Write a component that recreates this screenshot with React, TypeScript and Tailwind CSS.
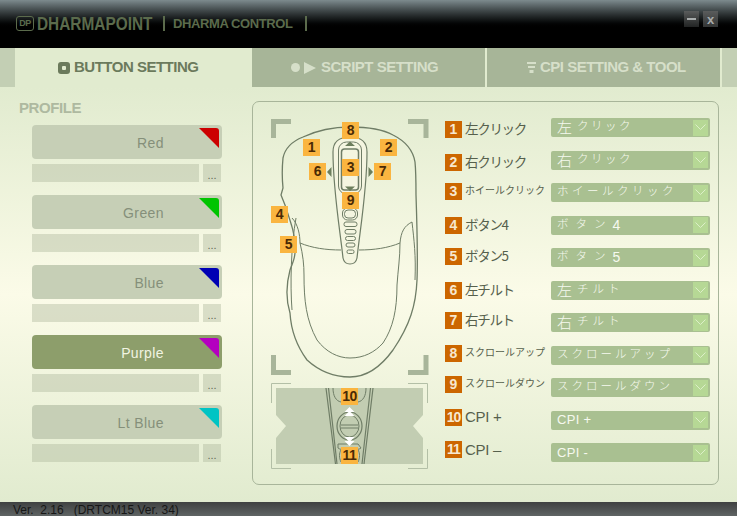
const uiFont = { fontFamily: '"Liberation Sans", Arial, sans-serif' };

const profiles = [
  { name: "Red", color: "#cc0000" },
  { name: "Green", color: "#00c400" },
  { name: "Blue", color: "#0000b4" },
  { name: "Purple", color: "#b400c0", active: true },
  { name: "Lt Blue", color: "#00c4c4" },
];

const rows = [
  { no: "1", shift: "mt-[3px]", label: "左クリック", head: "左", rest: "クリック", track: "tracking-[2.5px]" },
  { no: "2", shift: "mt-[3px]", label: "右クリック", head: "右", rest: "クリック", track: "tracking-[2.5px]" },
  { no: "3", shift: "mt-0", label: "ホイールクリック", small: true, rest: "ホイールクリック", track: "tracking-[3.5px]" },
  { no: "4", shift: "mt-[1px]", label: "ボタン4", rest: "ボタン", tail: "4", track: "tracking-[7px]" },
  { no: "5", shift: "mt-0", label: "ボタン5", rest: "ボタン", tail: "5", track: "tracking-[7px]" },
  { no: "6", shift: "mt-[1px]", label: "左チルト", head: "左", rest: "チルト", track: "tracking-[4px]" },
  { no: "7", shift: "-mt-[1px]", label: "右チルト", head: "右", rest: "チルト", track: "tracking-[4px]" },
  { no: "8", shift: "-mt-[1px]", label: "スクロールアップ", small: true, rest: "スクロールアップ", track: "tracking-[3px]" },
  { no: "9", shift: "-mt-[2px]", label: "スクロールダウン", small: true, rest: "スクロールダウン", track: "tracking-[3px]" },
  { no: "10", shift: "-mt-[2px]", label: "CPI +", latin: "CPI +" },
  { no: "11", shift: "-mt-[2px]", label: "CPI –", latin: "CPI -" },
];

const pins = [
  { no: "8", cls: "left-[89px] top-[20px]" },
  { no: "1", cls: "left-[50px] top-[37px]" },
  { no: "2", cls: "left-[127px] top-[37px]" },
  { no: "6", cls: "left-[56px] top-[61px]" },
  { no: "7", cls: "left-[121px] top-[61px]" },
  { no: "3", cls: "left-[89px] top-[57px]" },
  { no: "9", cls: "left-[89px] top-[90px]" },
  { no: "4", cls: "left-[18px] top-[104px]" },
  { no: "5", cls: "left-[27px] top-[134px]" },
  { no: "10", cls: "left-[88px] top-[286px]" },
  { no: "11", cls: "left-[88px] top-[345px]" },
];

function MouseDrawing() {
  const line = "#6f7d66";
  return (
    <svg className="block h-full w-full" viewBox="253 102 192 382" fill="none">
      {/* frame corners */}
      <path d="M273.500 138V121.500H291M426 138V121.500H408M273.500 355V372.500H291M426 355V372.500H408" stroke="#a8b59a" strokeWidth="5" />
      <path d="M271.500 403V383.500H291M427.500 403V383.500H408M271.500 449V468.500H291M427.500 449V468.500H408" stroke="#b3bfa6" />

      {/* body */}
      <path d="M283 158C285 148 293 141 303 137C318 130 335 127 350 127C367 127 384 130 393 135C405 141 413 150 415 162C416 172 416 182 416 195C417 225 418 255 417 280C416 305 410 325 393 350C380 368 365 377 350 377C332 377 318 370 307 360C296 345 291 330 290 313C286 300 286 285 290 270C293 262 296 256 295 245C295 235 292 226 285 205L281 195L283 188C282 178 282 168 283 158Z" stroke={line} strokeWidth="1.300" />
      <path d="M296 218C291 245 290 285 292 310" stroke={line} />
      <path d="M292 218C298 224 300 235 300 243C303 255 304 265 304 275C304 300 306 320 317 340C326 352 338 358 350 358C364 358 375 352 383 343C393 328 397 310 397 285C398 270 400 258 400 243C401 232 404 226 412 222" stroke={line} />
      <path d="M300 243C312 248 326 250 341 250M359 250C374 250 388 248 400 243" stroke={line} />
      <path d="M412 222C414 240 416 255 415 280" stroke={line} />

      {/* centre strip */}
      <path d="M350 137C338 137 333 143 333 152C333 190 340 230 343 258C344 263 347 264 350 264C353 264 356 263 357 258C360 230 367 190 367 152C367 143 362 137 350 137Z" fill="#f4f5e0" stroke={line} strokeWidth="1.200" />
      <rect x="338.500" y="142" width="23" height="52" rx="8" stroke={line} />
      <rect x="341.500" y="149" width="17" height="41" rx="3" stroke={line} strokeWidth="1.500" />
      <path d="M350 141.500L355 146H345ZM350 191L345 186.500H355ZM327 172L331.500 167V177ZM373 172L368.500 167V177Z" fill="#6c7e5c" />
      <rect x="342.500" y="208" width="15" height="12" rx="5" stroke={line} />
      <rect x="344.500" y="210" width="11" height="8" rx="3.500" stroke={line} />
      <rect x="344" y="222" width="13" height="4.500" rx="2" stroke={line} />
      <rect x="345" y="229.500" width="11" height="4.500" rx="2" stroke={line} />
      <rect x="345.500" y="236.500" width="10" height="4" rx="2" stroke={line} />
      <rect x="346" y="243" width="9" height="4" rx="2" stroke={line} />
      <rect x="347" y="250" width="7" height="3.500" rx="1.500" stroke={line} />

      {/* zoomed wheel */}
      <path d="M276 388H423V415L413 426L423 438V464H276V438L286 426L276 415Z" fill="#c2cdb2" />
      <path d="M326 388L335.500 464M328.500 388L337 464M373 388L364 464M370.500 388L362 464" stroke={line} strokeWidth="1.200" />
      <path d="M333 388C333 396 336 401 341 402M366 388C366 396 363 401 358 402" stroke={line} />
      <path d="M338 444L358 444L361 448C358 451 341 451 338 448Z" fill="#c2cdb2" stroke={line} />
      <ellipse cx="349.500" cy="426" rx="12.500" ry="14" stroke={line} strokeWidth="1.200" />
      <ellipse cx="349.500" cy="426" rx="9.500" ry="11" stroke={line} />
      <path d="M341 425H358M341 428H358" stroke={line} />
      <path d="M349.500 407L354.500 412H344.500ZM349.500 411L354.500 416H344.500ZM349.500 446L344.500 441H354.500ZM349.500 442L344.500 437H354.500Z" fill="#fff" />
      <path d="M341 450C339 453 339 458 341 462M358 450C360 453 360 458 358 462" stroke={line} />
    </svg>
  );
}

function Pin({ no, cls }: { no: string; cls: string }) {
  return (
    <div className={`absolute flex h-[17px] w-[17px] items-center justify-center bg-[#fab540] text-[14px] font-bold tracking-[-0.5px] text-[#4a2a05] ${cls}`}>
      {no}
    </div>
  );
}

function ProfileItem({ name, color, active }: { name: string; color: string; active?: boolean }) {
  return (
    <div className="flex w-[190px] flex-col gap-[5px]">
      <div className={`relative flex h-[34px] items-center justify-end rounded-[4px] pt-[2px] pr-[58px] text-[14px] tracking-[0.4px] ${active ? "bg-[#8d9e6b] text-[#f1f4e2]" : "bg-[#c6cfb6] text-[#858f7a]"}`}>
        {name}
        <svg className="absolute right-[3px] top-[3px]" width="20" height="20" viewBox="0 0 20 20">
          <path d="M0 0H17Q20 0 20 3V20Z" fill={color} />
        </svg>
      </div>
      <div className="flex h-[18px] gap-[4px]">
        <div className="w-[167px] bg-[#a9b598]/40" />
        <div className="flex w-[18px] items-end justify-center bg-[#a9b598]/40 pb-[1px] text-[11px] leading-[11px] text-[#5f6a55]">...</div>
      </div>
    </div>
  );
}

type Row = (typeof rows)[number];

function SettingRow({ row }: { row: Row }) {
  let labelCls = "mb-[3px] text-[13.500px] tracking-[-1.300px]";
  if (row.small) labelCls = "mb-[3px] text-[10px]";
  if (row.latin) labelCls = "text-[15px] tracking-[-0.3px]";
  return (
    <div className="flex h-[19px] items-start">
      <div className={`flex h-[17px] w-[106px] shrink-0 items-center ${row.shift}`}>
        <div className={`flex h-[17px] w-[17px] shrink-0 items-center justify-center bg-[#cc6600] text-[14px] font-bold text-[#f7e8d0] ${row.no.length > 1 ? "tracking-[-1px]" : ""}`}>
          {row.no}
        </div>
        <div
          className={`ml-[3px] whitespace-pre leading-[16px] ${labelCls} text-[#56604c]`}
          style={{ fontFamily: row.latin ? '"Liberation Sans", sans-serif' : '"Noto Sans CJK JP", sans-serif' }}
        >
          {row.label}
        </div>
      </div>
      <div className="flex h-[19px] w-[159px] items-center justify-between rounded-[2px] bg-[#a9c091] pr-[2px] pl-[6px] text-[#f6f9ef]">
        <div className={`flex h-full whitespace-pre ${row.latin ? "items-center" : "items-start"}`} style={{ fontFamily: '"Noto Sans CJK JP", sans-serif', fontWeight: 300 }}>
          {row.latin && <span className="text-[13px] font-normal tracking-[0.3px]" style={uiFont}>{row.latin}</span>}
          {row.head && <span className="mr-[5px] text-[15px] leading-[17px]">{row.head}</span>}
          {row.rest && <span className={`text-[11.500px] leading-[15px] ${row.track}`}>{row.rest}</span>}
          {row.tail && <span className="text-[14px] leading-[18px]" style={uiFont}>{row.tail}</span>}
        </div>
        <div className="flex h-[16px] w-[15px] items-center justify-center bg-[#b6d895]">
          <svg width="11" height="7" viewBox="0 0 11 7" fill="none">
            <path d="M0.500 0.500L5.500 5.500L10.500 0.500" stroke="#dcefc8" />
          </svg>
        </div>
      </div>
    </div>
  );
}

export default function App() {
  return (
    <div className="flex h-[516px] w-[737px] flex-col overflow-hidden bg-[#e1ebcf]" style={uiFont}>
      {/* title bar */}
      <div className="flex h-[48px] shrink-0 items-start bg-linear-to-b from-[#7d8b8e] via-[#000000] via-60% to-black pt-[16px] pl-[16px]">
        <div className="flex h-[15px] w-[18px] items-center justify-center rounded-[3px] border border-[#5b6b4c] text-[9px] font-bold leading-none tracking-[-0.5px] text-[#5b6b4c]">DP</div>
        <div className="ml-[3px] w-[117px] origin-left scale-x-[0.81] whitespace-nowrap text-[19px] font-bold leading-[15px] text-[#5b6b4c]">DHARMAPOINT</div>
        <div className="ml-[9px] h-[15px] w-[2px] bg-[#5b6b4c]" />
        <div className="ml-[8px] w-[124px] whitespace-nowrap text-[13px] font-bold leading-[15px] tracking-[-0.4px] text-[#5b6b4c]">DHARMA CONTROL</div>
        <div className="ml-[8px] h-[15px] w-[2px] bg-[#5b6b4c]" />
        <div className="ml-auto mr-[19px] -mt-[5px] flex gap-[4px]">
          <div className="flex h-[16px] w-[15px] items-center justify-center bg-linear-to-b from-[#5a5c5c] to-[#222424]">
            <div className="h-[2px] w-[9px] bg-[#a8acac]" />
          </div>
          <div className="flex h-[16px] w-[15px] items-center justify-center bg-linear-to-b from-[#5a5c5c] to-[#333535] text-[13px] font-bold leading-none text-[#a8acac]">x</div>
        </div>
      </div>

      {/* tabs */}
      <div className="flex h-[39px] shrink-0 text-[15px] font-bold tracking-[-0.5px]">
        <div className="w-[15px] bg-[#c3cfb4]" />
        <div className="flex w-[237px] items-center bg-[#e1ebcf] pl-[43px] text-[#6b7a5c]">
          <div className="mr-[4px] flex h-[12px] w-[12px] items-center justify-center rounded-[3px] bg-[#6b7a5c]">
            <div className="h-[4px] w-[4px] rounded-[1px] bg-[#e1ebcf]" />
          </div>
          BUTTON SETTING
        </div>
        <div className="flex w-[233px] items-center bg-[#a7b598] pl-[39px] text-[#d6dfc9]">
          <div className="h-[9px] w-[9px] rounded-full bg-[#d6dfc9]" />
          <div className="ml-[4px] mr-[5px] h-0 w-0 border-y-[6px] border-l-[12px] border-y-transparent border-l-[#d6dfc9]" />
          SCRIPT SETTING
        </div>
        <div className="w-[2px] bg-[#e1ebcf]" />
        <div className="flex w-[233px] items-center bg-[#a7b598] pl-[40px] text-[#d6dfc9]">
          <svg className="mr-[4px]" width="9" height="11" viewBox="0 0 9 11" fill="#d6dfc9">
            <path d="M0 0H9V2H0ZM1 4H8V6H1ZM2.500 8H6.500V11H2.500Z" />
          </svg>
          CPI SETTING &amp; TOOL
        </div>
        <div className="w-[2px] bg-[#e1ebcf]" />
        <div className="flex-1 bg-[#c3cfb4]" />
      </div>

      {/* body */}
      <div className="flex min-h-0 flex-1 bg-linear-to-b from-[#e1ebcf] via-[#fbfbe8] to-[#e1ebcf] pt-[14px]">
        <div className="w-[252px] shrink-0">
          <div className="-mt-[2px] pl-[19px] text-[15px] font-bold leading-[18px] tracking-[-0.4px] text-[#aeb9a0]">PROFILE</div>
          <div className="ml-[32px] mt-[8px] flex flex-col gap-[13px]">
            {profiles.map((p) => (
              <ProfileItem key={p.name} {...p} />
            ))}
          </div>
        </div>

        <div className="flex h-[384px] w-[467px] rounded-[7px] border border-[#a8b59a]">
          <div className="relative h-full w-[192px] shrink-0">
            <MouseDrawing />
            <div className="absolute inset-0 font-bold">
              {pins.map((p) => (
                <Pin key={p.no} {...p} />
              ))}
            </div>
          </div>
          <div className="flex flex-col gap-[13.500px] pt-[16px]">
            {rows.map((r) => (
              <SettingRow key={r.no} row={r} />
            ))}
          </div>
        </div>
      </div>

      {/* status bar */}
      <div className="h-[14px] shrink-0 overflow-hidden whitespace-pre bg-linear-to-b from-[#3f4141] to-[#5f6464] pl-[13px] text-[12px] leading-[17px] text-[#161616]">
        {"Ver.  2.16   (DRTCM15 Ver. 34)"}
      </div>
    </div>
  );
}
